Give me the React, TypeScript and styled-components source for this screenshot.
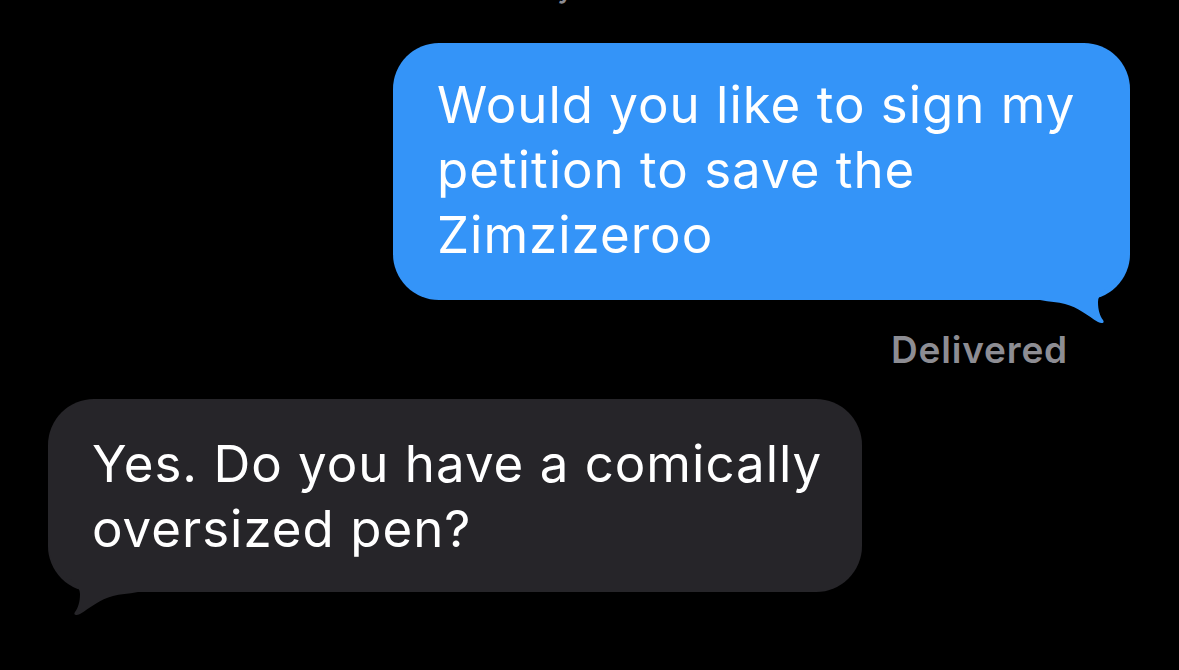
import styled, { createGlobalStyle } from "styled-components";

const GlobalStyle = createGlobalStyle`
  html, body {
    margin: 0;
    padding: 0;
    background: #000000;
    overflow: hidden;
  }
`;

const Screen = styled.div`
  width: 1179px;
  height: 670px;
  background: #000000;
  display: flex;
  flex-direction: column;
  overflow: hidden;
  font-family: Inter, "Noto Sans", sans-serif;
`;

const Timestamp = styled.div`
  margin-top: -28px;
  height: 34px;
  text-align: center;
  color: #8d8d93;
  font-size: 26px;
  font-weight: 600;
  line-height: 34px;
  letter-spacing: 0.8px;
`;

const Row = styled.div<{ $side: "left" | "right"; $gap: number }>`
  display: flex;
  justify-content: ${(p) => (p.$side === "right" ? "flex-end" : "flex-start")};
  padding: 0 49px 0 48px;
  margin-top: ${(p) => p.$gap}px;
`;

const Bubble = styled.div<{ $sent?: boolean; $width: number }>`
  position: relative;
  box-sizing: border-box;
  width: ${(p) => p.$width}px;
  padding: ${(p) => (p.$sent ? "29px 30px 33px 44px" : "32px 30px 31px 44px")};
  border-radius: 46px;
  background: ${(p) => (p.$sent ? "#3494f8" : "#262529")};
  color: #ffffff;
  font-size: 51px;
  line-height: 65px;
  letter-spacing: 1px;
`;

const BubbleText = styled.span`
  position: relative;
  z-index: 1;
`;

const Tail = styled.svg<{ $sent?: boolean }>`
  position: absolute;
  bottom: -25px;
  width: 105px;
  height: 95px;
  ${(p) => (p.$sent ? "right: -5px;" : "left: -5px; transform: scaleX(-1);")}
  pointer-events: none;
`;

const Status = styled.div`
  display: flex;
  justify-content: flex-end;
  padding-right: 111px;
  margin-top: 29px;
  color: #8d8d93;
  font-size: 37px;
  font-weight: 600;
  line-height: 42px;
  letter-spacing: 0.8px;
`;

const BubbleTail = ({ sent, color }: { sent?: boolean; color: string }) => (
  <Tail $sent={sent} viewBox="0 0 105 95">
    <path
      fill={color}
      d="M10 0 H100 V15 C100 35 95 45 85 52 C75 59 68 64 68 72 C68 80 70 86 73 90 C75 93 72 94 68 92 C58 86 48 77 35 74 C28 72 20 72 10 70 Z"
    />
  </Tail>
);

export default function App() {
  return (
    <>
      <GlobalStyle />
      <Screen>
        <Timestamp>Today 9:41 PM</Timestamp>
        <Row $side="right" $gap={37}>
          <Bubble $sent $width={737}>
            <BubbleTail sent color="#3494f8" />
            <BubbleText>Would you like to sign my petition to save the Zimzizeroo</BubbleText>
          </Bubble>
        </Row>
        <Status>Delivered</Status>
        <Row $side="left" $gap={28}>
          <Bubble $width={814}>
            <BubbleTail color="#262529" />
            <BubbleText>Yes. Do you have a comically oversized pen?</BubbleText>
          </Bubble>
        </Row>
      </Screen>
    </>
  );
}
